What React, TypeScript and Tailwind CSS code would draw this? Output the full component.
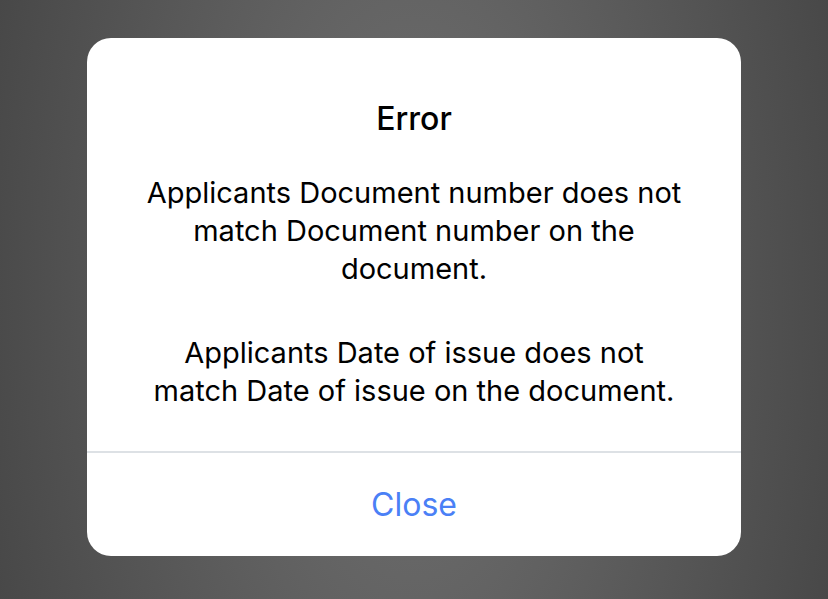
export default function App() {
  return (
    <div
      className="w-[828px] h-[599px] flex items-start justify-center pt-[38px] bg-[radial-gradient(ellipse_440px_900px_at_50%_50%,#727272_0%,#484848_100%)]"
      style={{ fontFamily: 'Inter, "Noto Sans", sans-serif' }}
    >
      <div className="w-[654px] h-[518px] bg-white rounded-[24px] flex flex-col overflow-hidden">
        <div className="flex-1 flex flex-col items-center pt-[63px] px-[20px] text-center text-black">
          <div className="text-[32px] leading-[36px] font-medium">Error</div>
          <div className="mt-[37px] text-[29px] leading-[38px]">
            Applicants Document number does not
            <br />
            match Document number on the
            <br />
            document.
          </div>
          <div className="mt-[46px] text-[29px] leading-[38px]">
            Applicants Date of issue does not
            <br />
            match Date of issue on the document.
          </div>
        </div>
        <div className="h-[2px] bg-[#dde1e5]" />
        <div className="h-[103px] flex items-center justify-center text-[32px] text-[#4a80f6]">
          Close
        </div>
      </div>
    </div>
  );
}
